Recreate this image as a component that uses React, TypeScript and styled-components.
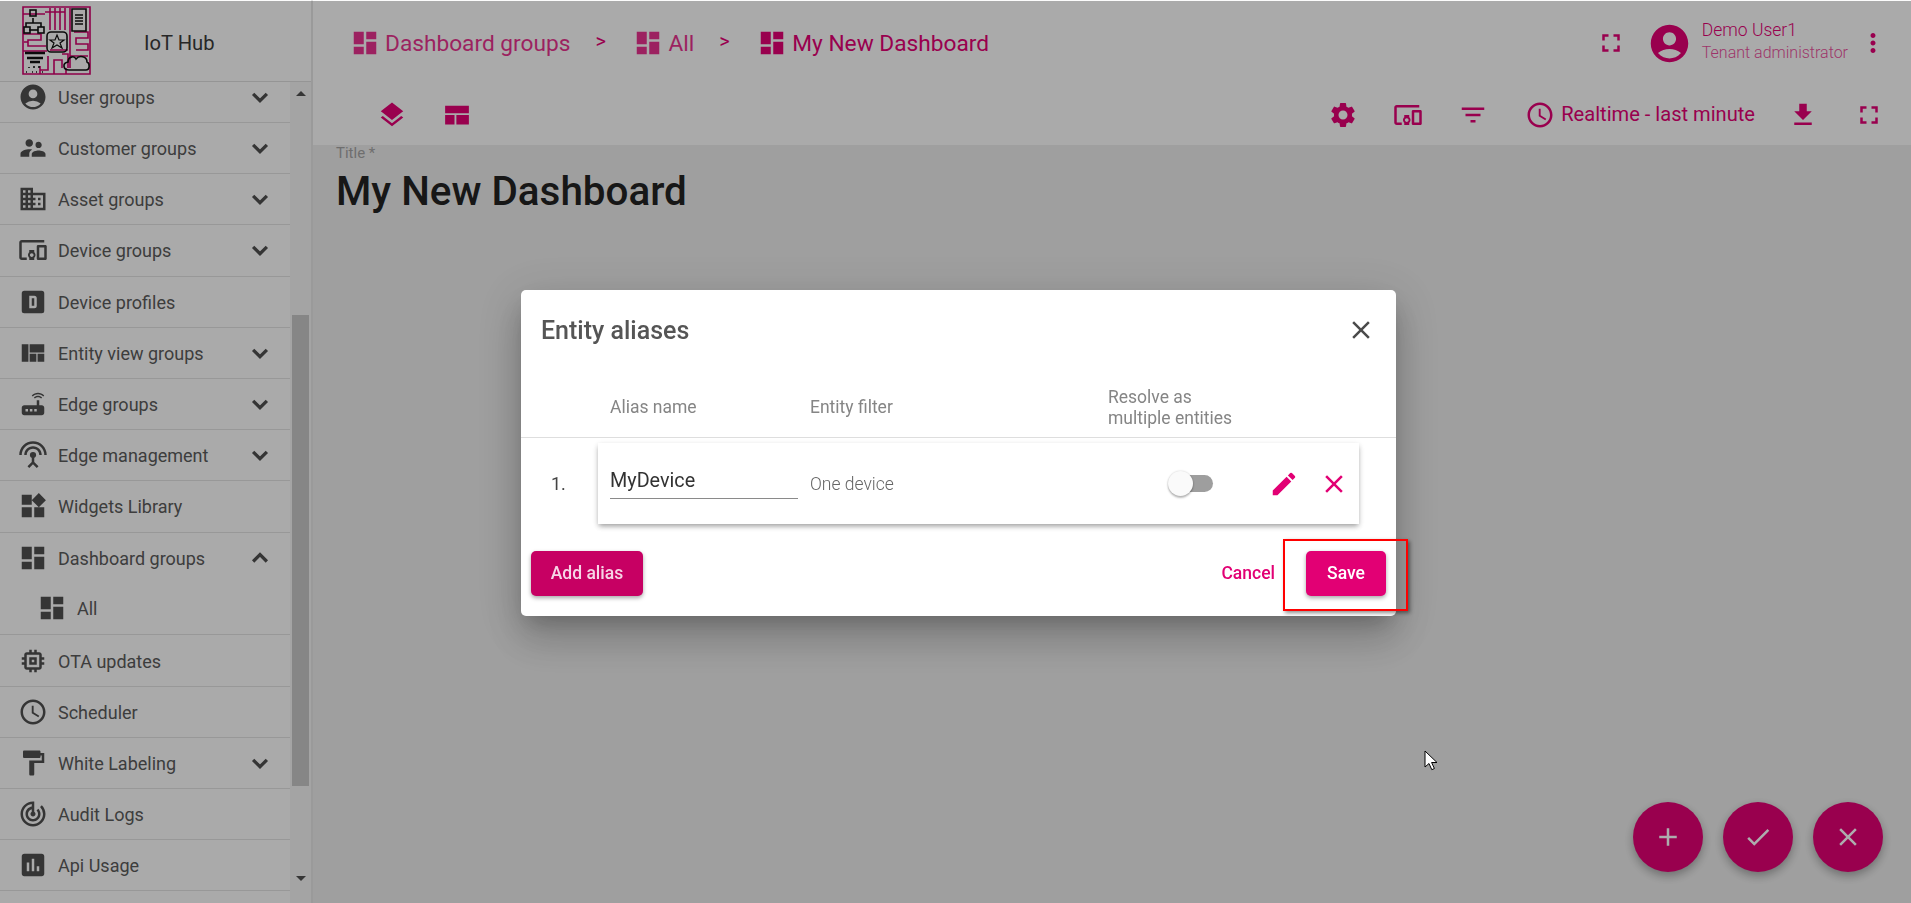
import React from 'react';
import styled, { createGlobalStyle } from 'styled-components';
import {
  MdAccountCircle, MdSupervisorAccount, MdDomain, MdDevicesOther, MdViewQuilt, MdRouter,
  MdSettingsInputAntenna, MdWidgets, MdDashboard, MdMemory, MdSchedule, MdFormatPaint,
  MdTrackChanges, MdAssessment, MdFullscreen, MdMoreVert,
  MdSettings, MdFilterList, MdFileDownload, MdLayers, MdEdit, MdClose, MdAdd, MdCheck,
} from 'react-icons/md';

const accent = '#e20074';

const GlobalStyle = createGlobalStyle`
  html, body {
    margin: 0;
    height: 100%;
    overflow: hidden;
    background: #e4e4e4;
    font-family: Roboto, "Liberation Sans", sans-serif;
  }
`;

const Page = styled.div`
  display: flex;
  height: 100vh;
  width: 100%;
  background: #ebebeb;
`;

const Sidebar = styled.aside`
  display: flex;
  flex-direction: column;
  flex: 0 0 311px;
  background: #fbfbfb;
  overflow: hidden;
  border-right: 2px solid #e4e4e4;
`;

const LogoBar = styled.div`
  display: flex;
  align-items: center;
  flex: 0 0 82px;
  box-sizing: border-box;
  padding-left: 22px;
  background: #fbfbfb;
  border-bottom: 1px solid #dcdcdc;
  position: relative;
  z-index: 1;
`;

const LogoTitle = styled.span`
  margin-left: 53px;
  padding-top: 4px;
  font-size: 20.2px;
  color: #3a3a3a;
`;

const NavArea = styled.div`
  display: flex;
  flex: 1;
  min-height: 0;
`;

const NavList = styled.nav`
  flex: 1;
  margin-top: -10.2px;
`;

const NavRow = styled.div`
  display: flex;
  align-items: center;
  height: 51.2px;
  box-sizing: border-box;
  padding-left: 18px;
  border-bottom: 1px solid #e0e0e0;
  color: #5a5a5a;
  font-size: 18px;
  svg { flex: none; color: #4e4e4e; }
`;

const NavLabel = styled.span`
  flex: 1;
  margin-left: 10px;
  padding-top: 1px;
`;

const NavChevron = styled.svg`
  margin-right: 15px;
  fill: none;
  stroke: currentColor;
  stroke-width: 2.6;
`;

const NavGroup = styled.div`
  border-bottom: 1px solid #e0e0e0;
`;

const NavGroupHead = styled(NavRow)`
  border-bottom: none;
`;

const NavSubRow = styled(NavRow)`
  padding-left: 37px;
  border-bottom: none;
  height: 50.8px;
  padding-bottom: 2px;
`;

const ScrollTrack = styled.div`
  display: flex;
  flex-direction: column;
  flex: 0 0 21px;
  background: #f2f2f2;
  position: relative;
`;

const ScrollArrow = styled.div<{ $down?: boolean }>`
  flex: 0 0 ${p => (p.$down ? '34px' : '23px')};
  display: flex;
  justify-content: center;
  align-items: ${p => (p.$down ? 'flex-start' : 'center')};
  &::before {
    content: '';
    margin-top: ${p => (p.$down ? '7px' : '0')};
    border-left: 5px solid transparent;
    border-right: 5px solid transparent;
    border-bottom: ${p => (p.$down ? 'none' : '5px solid #505050')};
    border-top: ${p => (p.$down ? '5px solid #505050' : 'none')};
  }
`;

const ScrollSpace = styled.div`
  flex: 1;
  display: flex;
  flex-direction: column;
  padding: 210px 2px 83px;
  min-height: 0;
`;

const ScrollThumb = styled.div`
  flex: 1;
  background: #c6c6c6;
`;

const Main = styled.main`
  display: flex;
  flex-direction: column;
  flex: 1;
  min-width: 0;
  position: relative;
`;

const TopBar = styled.header`
  flex: 0 0 145px;
  display: flex;
  flex-direction: column;
  background: #fbfbfb;
  color: ${accent};
`;

const TopRow = styled.div<{ $pad: string; $height: number }>`
  display: flex;
  align-items: center;
  height: ${p => p.$height}px;
  padding: ${p => p.$pad};
`;

const Crumb = styled.span<{ $dim?: boolean }>`
  display: flex;
  align-items: center;
  gap: 5px;
  font-size: 22.7px;
  font-weight: 400;
  opacity: ${p => (p.$dim ? 0.8 : 1)};
`;

const CrumbSep = styled.span`
  margin: -5px 27.5px 0 25px;
  font-size: 20px;
`;

const Spacer = styled.div`
  flex: 1;
`;

const IconSlot = styled.span<{ $left?: number }>`
  display: flex;
  margin-left: ${p => p.$left ?? 0}px;
`;

const UserText = styled.div`
  display: flex;
  flex-direction: column;
  gap: 3px;
  margin: 0 10px 0 10px;
  padding-bottom: 3px;
  font-size: 16px;
  font-weight: 300;
  line-height: 19px;
`;

const UserName = styled.span`
  font-size: 17.5px;
`;

const UserRole = styled.span`
  opacity: 0.7;
`;

const TimeLabel = styled.span`
  margin-left: 6px;
  padding-bottom: 2px;
  font-size: 20.1px;
  white-space: nowrap;
`;

const Content = styled.section`
  flex: 1;
  padding: 0 23px;
`;

const TitleLabel = styled.div`
  font-size: 15px;
  line-height: 16px;
  color: #a3a3a3;
`;

const TitleText = styled.h1`
  margin: 7px 0 0;
  font-size: 40.4px;
  line-height: 48px;
  font-weight: 500;
  color: #222;
`;

const FabRow = styled.div`
  position: absolute;
  right: 28px;
  bottom: 31px;
  display: flex;
  gap: 20px;
`;

const Fab = styled.button`
  display: flex;
  align-items: center;
  justify-content: center;
  width: 70px;
  height: 70px;
  padding: 0;
  border: none;
  border-radius: 50%;
  color: #fff;
  background: ${accent};
  box-shadow: 0 4px 10px rgba(0, 0, 0, 0.3);
`;

const Backdrop = styled.div`
  position: fixed;
  inset: 1px 0 0 0;
  z-index: 10;
  display: flex;
  align-items: center;
  justify-content: center;
  padding: 1px 0 0 6px;
  background: rgba(0, 0, 0, 0.32);
`;

const Dialog = styled.div`
  position: relative;
  width: 875px;
  height: 326px;
  display: flex;
  flex-direction: column;
  background: #fff;
  border-radius: 5px;
  box-shadow: 0 11px 20px -7px rgba(0, 0, 0, 0.2), 0 24px 38px 3px rgba(0, 0, 0, 0.14), 0 9px 46px 8px rgba(0, 0, 0, 0.12);
`;

const DialogHead = styled.div`
  display: flex;
  align-items: center;
  justify-content: space-between;
  height: 81px;
  padding: 0 20px 0 20px;
`;

const DialogTitle = styled.h2`
  margin: 0;
  font-size: 25px;
  font-weight: 500;
  color: #555;
`;

const DialogClose = styled.span`
  display: flex;
  color: #4a4a4a;
`;

const ColumnHead = styled.div`
  display: grid;
  grid-template-columns: 200px 298px 1fr;
  align-items: center;
  height: 67px;
  box-sizing: border-box;
  padding: 8px 0 0 89px;
  border-bottom: 1px solid #dedede;
  font-size: 17.5px;
  font-weight: 400;
  line-height: 21px;
  color: #858585;
`;

const AliasRow = styled.div`
  display: flex;
  align-items: center;
  margin-top: 5px;
`;

const AliasIndex = styled.span`
  flex: 0 0 47px;
  margin-left: 30px;
  font-size: 18px;
  color: #444;
`;

const AliasCard = styled.div`
  display: grid;
  grid-template-columns: 200px 298px 1fr;
  align-items: center;
  width: 761px;
  height: 81px;
  box-sizing: border-box;
  padding-left: 12px;
  background: #fff;
  box-shadow: 0 3px 5px -1px rgba(0, 0, 0, 0.3), 0 2px 6px rgba(0, 0, 0, 0.12);
`;

const NameInput = styled.div`
  width: 188px;
  margin-top: -2px;
  padding: 1px 0 2px;
  border-bottom: 1px solid #8a8a8a;
  font-size: 19.8px;
  line-height: 30px;
  color: #333;
`;

const FilterText = styled.span`
  padding-top: 2px;
  font-size: 17.5px;
  font-weight: 300;
  color: #666;
`;

const RowTools = styled.div`
  display: flex;
  align-items: center;
  margin-left: 67px;
`;

const ToggleTrack = styled.div`
  position: relative;
  width: 38px;
  height: 17px;
  border-radius: 9px;
  background: #9e9e9e;
`;

const ToggleThumb = styled.div`
  position: absolute;
  left: -7px;
  top: -4px;
  width: 25px;
  height: 25px;
  border-radius: 50%;
  background: #fafafa;
  box-shadow: 0 2px 2px rgba(0, 0, 0, 0.25), 0 0 2px rgba(0, 0, 0, 0.2);
`;

const RowIcon = styled.span<{ $left: number }>`
  display: flex;
  margin-left: ${p => p.$left}px;
  padding-top: 2px;
  color: ${accent};
`;

const DialogFoot = styled.div`
  display: flex;
  align-items: center;
  margin-top: 27px;
  padding: 0 10px;
`;

const SolidButton = styled.button<{ $dark?: boolean; $width: number }>`
  width: ${p => p.$width}px;
  height: 45px;
  padding: 0;
  border: none;
  border-radius: 5px;
  font: 500 17.5px Roboto, sans-serif;
  color: ${p => (p.$dark ? '#f6d5e6' : '#fff')};
  background: ${p => (p.$dark ? '#c70063' : accent)};
  box-shadow: 0 2px 4px rgba(0, 0, 0, 0.35);
`;

const TextButton = styled.button`
  margin-right: 31px;
  padding: 0;
  border: none;
  background: none;
  font: 500 17.5px Roboto, sans-serif;
  color: ${accent};
`;

const Annotation = styled.div`
  position: absolute;
  left: 762px;
  top: 249px;
  width: 125px;
  height: 72px;
  box-sizing: border-box;
  border: 2px solid #f00;
  box-shadow: 2px 2px 4px rgba(0, 0, 0, 0.45);
`;

const Pointer = styled.svg`
  position: fixed;
  z-index: 20;
  left: 1424px;
  top: 750px;
`;

const LogoMark = () => (
  <svg width="69" height="69" viewBox="0 0 69 69">
    <rect width="69" height="69" fill="#fbfbfb" />
    <path
      d="M1 1h67v67H1zM1 8h22M28 2v22M33 2v22M38 2v22M43 2v22M23 6h20M48 2v60M1 28h18v6H6v6h18M1 45h24M28 44h18M52 26h14v6H54v6h12v6H54M48 50h18M32 68V54h8v8M40 48h6v14M2 36h4M18 60v8M26 50v14h-8M44 62v6"
      fill="none"
      stroke="#d1006c"
      strokeWidth="1.6"
    />
    <g fill="none" stroke="#111" strokeWidth="1.6">
      <path d="M11 12v5M11 17H4v4M11 17h8v4" />
      <rect x="8" y="4" width="6" height="6" />
      <rect x="2" y="21" width="6" height="6" />
      <rect x="16" y="21" width="6" height="6" />
      <path d="M7 24h9" />
      <path d="M50 3h14v22H50z" />
      <path d="M53 9h8M53 12h8M53 15h8M53 18h8" />
      <rect x="25" y="26" width="20" height="20" rx="4" />
      <path d="M35 29l2 5h5l-4 3 2 5-5-3-5 3 2-5-4-3h5z" strokeWidth="1.2" />
      <path d="M3 47h20M5 52h16M8 56h10" strokeWidth="2.4" />
      <path d="M7 61v1M12 60v2M17 60v2M4 66h1M10 66h1M14 66h1M20 66h1" />
      <path d="M47 64c-6 0-7-7-1-8 0-5 6-7 8-3 3-4 11-3 11 3 3 1 3 8-1 8z" />
    </g>
  </svg>
);

const DeviceProfileIcon = () => (
  <svg width="30" height="30" viewBox="0 0 24 24" fill="currentColor">
    <path
      fillRule="evenodd"
      d="M5 3h14a2 2 0 0 1 2 2v14a2 2 0 0 1-2 2H5a2 2 0 0 1-2-2V5a2 2 0 0 1 2-2zm4 4v10h4a2 2 0 0 0 2-2V9a2 2 0 0 0-2-2H9zm2 2h2v6h-2V9z"
    />
  </svg>
);

const LayoutIcon = () => (
  <svg width="30" height="30" viewBox="0 0 24 24" fill="currentColor">
    <path d="M2.500 4.500h19v6h-19zM2.500 12h7.500v7.500H2.500zM11.500 12h10v7.500h-10z" />
  </svg>
);

const Chevron = ({ up }: { up?: boolean }) => (
  <NavChevron width="30" height="30" viewBox="0 0 24 24">
    <path d={up ? 'M6.500 14.800L12 9.300l5.500 5.500' : 'M6.500 9.500L12 15l5.500-5.500'} />
  </NavChevron>
);

const navTop = [
  { icon: MdAccountCircle, label: 'User groups', more: true },
  { icon: MdSupervisorAccount, label: 'Customer groups', more: true },
  { icon: MdDomain, label: 'Asset groups', more: true },
  { icon: MdDevicesOther, label: 'Device groups', more: true },
  { icon: DeviceProfileIcon, label: 'Device profiles' },
  { icon: MdViewQuilt, label: 'Entity view groups', more: true },
  { icon: MdRouter, label: 'Edge groups', more: true },
  { icon: MdSettingsInputAntenna, label: 'Edge management', more: true },
  { icon: MdWidgets, label: 'Widgets Library' },
];

const navBottom = [
  { icon: MdMemory, label: 'OTA updates' },
  { icon: MdSchedule, label: 'Scheduler' },
  { icon: MdFormatPaint, label: 'White Labeling', more: true },
  { icon: MdTrackChanges, label: 'Audit Logs' },
  { icon: MdAssessment, label: 'Api Usage' },
];

function NavItem({ icon: Icon, label, more }: { icon: React.ElementType; label: string; more?: boolean }) {
  return (
    <NavRow>
      <Icon size={30} />
      <NavLabel>{label}</NavLabel>
      {more && <Chevron />}
    </NavRow>
  );
}

function App() {
  return (
    <Page>
      <GlobalStyle />
      <Sidebar>
        <LogoBar>
          <LogoMark />
          <LogoTitle>IoT Hub</LogoTitle>
        </LogoBar>
        <NavArea>
          <NavList>
            {navTop.map(item => (
              <NavItem key={item.label} {...item} />
            ))}
            <NavGroup>
              <NavGroupHead>
                <MdDashboard size={30} />
                <NavLabel>Dashboard groups</NavLabel>
                <Chevron up />
              </NavGroupHead>
              <NavSubRow>
                <MdDashboard size={30} />
                <NavLabel>All</NavLabel>
              </NavSubRow>
            </NavGroup>
            {navBottom.map(item => (
              <NavItem key={item.label} {...item} />
            ))}
          </NavList>
          <ScrollTrack>
            <ScrollArrow />
            <ScrollSpace>
              <ScrollThumb />
            </ScrollSpace>
            <ScrollArrow $down />
          </ScrollTrack>
        </NavArea>
      </Sidebar>
      <Main>
        <TopBar>
          <TopRow $pad="0 23px 0 37px" $height={86}>
            <Crumb $dim>
              <MdDashboard size={30} />
              Dashboard groups
            </Crumb>
            <CrumbSep>&gt;</CrumbSep>
            <Crumb $dim>
              <MdDashboard size={30} />
              All
            </Crumb>
            <CrumbSep>&gt;</CrumbSep>
            <Crumb>
              <MdDashboard size={30} />
              My New Dashboard
            </Crumb>
            <Spacer />
            <MdFullscreen size={30} />
            <IconSlot $left={21}>
              <MdAccountCircle size={45} />
            </IconSlot>
            <UserText>
              <UserName>Demo User1</UserName>
              <UserRole>Tenant administrator</UserRole>
            </UserText>
            <MdMoreVert size={30} />
          </TopRow>
          <TopRow $pad="0 27px 2px 64px" $height={57}>
            <MdLayers size={30} />
            <IconSlot $left={35}>
              <LayoutIcon />
            </IconSlot>
            <Spacer />
            <MdSettings size={30} />
            <IconSlot $left={35}>
              <MdDevicesOther size={30} />
            </IconSlot>
            <IconSlot $left={35}>
              <MdFilterList size={30} />
            </IconSlot>
            <IconSlot $left={37}>
              <MdSchedule size={30} />
            </IconSlot>
            <TimeLabel>Realtime - last minute</TimeLabel>
            <IconSlot $left={33}>
              <MdFileDownload size={30} />
            </IconSlot>
            <IconSlot $left={36}>
              <MdFullscreen size={30} />
            </IconSlot>
          </TopRow>
        </TopBar>
        <Content>
          <TitleLabel>Title *</TitleLabel>
          <TitleText>My New Dashboard</TitleText>
        </Content>
        <FabRow>
          <Fab>
            <MdAdd size={30} />
          </Fab>
          <Fab>
            <MdCheck size={30} />
          </Fab>
          <Fab>
            <MdClose size={30} />
          </Fab>
        </FabRow>
      </Main>
      <Backdrop>
        <Dialog>
          <DialogHead>
            <DialogTitle>Entity aliases</DialogTitle>
            <DialogClose>
              <MdClose size={30} />
            </DialogClose>
          </DialogHead>
          <ColumnHead>
            <span>Alias name</span>
            <span>Entity filter</span>
            <span>
              Resolve as
              <br />
              multiple entities
            </span>
          </ColumnHead>
          <AliasRow>
            <AliasIndex>1.</AliasIndex>
            <AliasCard>
              <NameInput>MyDevice</NameInput>
              <FilterText>One device</FilterText>
              <RowTools>
                <ToggleTrack>
                  <ToggleThumb />
                </ToggleTrack>
                <RowIcon $left={56}>
                  <MdEdit size={30} />
                </RowIcon>
                <RowIcon $left={20}>
                  <MdClose size={30} />
                </RowIcon>
              </RowTools>
            </AliasCard>
          </AliasRow>
          <DialogFoot>
            <SolidButton $dark $width={112}>Add alias</SolidButton>
            <Spacer />
            <TextButton>Cancel</TextButton>
            <SolidButton $width={80}>Save</SolidButton>
          </DialogFoot>
          <Annotation />
        </Dialog>
      </Backdrop>
      <Pointer width="14" height="21" viewBox="0 0 14 21">
        <path d="M1 1v16l4-3.500 2.800 6.200 2.600-1.200L7.600 12.500H13z" fill="#fff" stroke="#000" strokeWidth="1" />
      </Pointer>
    </Page>
  );
}

export default App;
